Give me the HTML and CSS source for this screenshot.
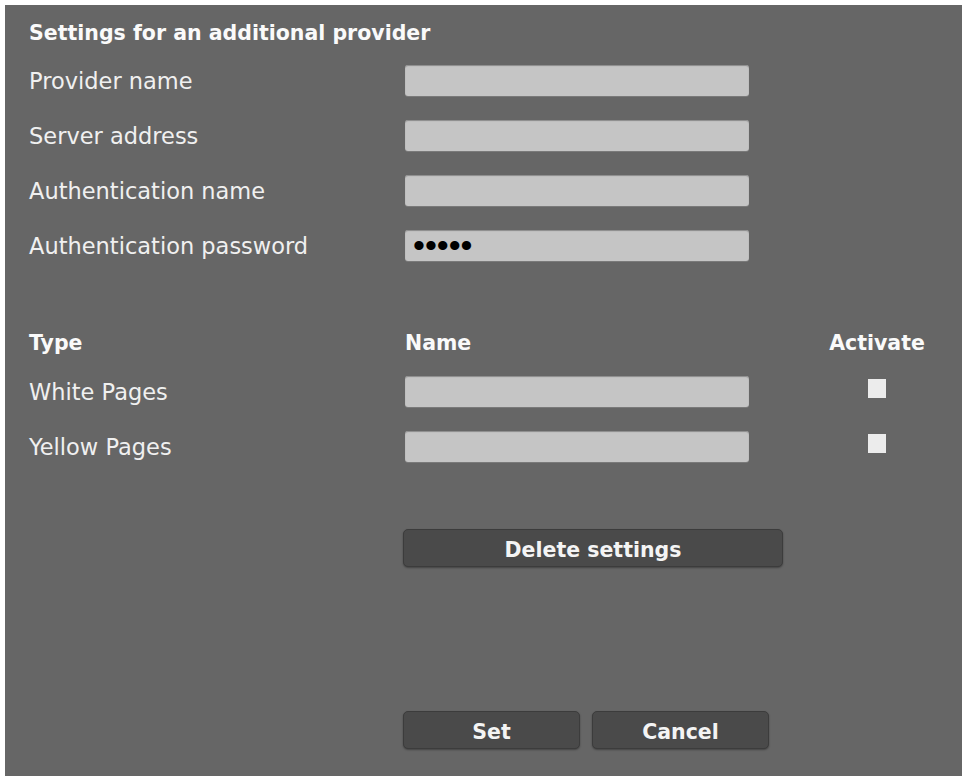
FILE: index.html
```html
<!DOCTYPE html>
<html>
	<head>
		<meta charset="UTF-8">
		<title>Settings for an additional provider</title>
		<link rel="stylesheet" href="styles.css">
	</head>
	<body>
		<div id="panel">
			<h2>Settings for an additional provider</h2>
			<div class="row">
				<label>Provider name</label><input type="text">
			</div>
			<div class="row">
				<label>Server address</label><input type="text">
			</div>
			<div class="row">
				<label>Authentication name</label><input type="text">
			</div>
			<div class="row">
				<label>Authentication password</label><input type="password" value="12345">
			</div>

			<div class="grid head">
				<span>Type</span><span>Name</span><span></span><span class="act">Activate</span>
			</div>
			<div class="grid line">
				<label>White Pages</label><input type="text"><span></span><span class="act"><i class="box"></i></span>
			</div>
			<div class="grid line">
				<label>Yellow Pages</label><input type="text"><span></span><span class="act"><i class="box"></i></span>
			</div>

			<div class="actions del">
				<button class="btn wide">Delete settings</button>
			</div>
			<div class="actions bottom">
				<button class="btn">Set</button>
				<button class="btn">Cancel</button>
			</div>
		</div>
	</body>
</html>
```

FILE: styles.css
```css
*{
	margin: 0;
	padding: 0;
	box-sizing: border-box;
}
body{
	background: #fff;
	font-family: "DejaVu Sans", Verdana, sans-serif;
	color: #f2f2f2;
}
#panel{
	margin: 5px 3px 0 5px;
	height: 771px;
	padding: 16px 0 0 24px;
	background: #666666;
	overflow: hidden;
}
#panel h2{
	font-size: 20.5px;
	line-height: 24px;
	font-weight: bold;
	color: #fafafa;
	margin-bottom: 8px;
}
.row,
.grid{
	display: grid;
	grid-template-columns: 376px 344px 80px 96px;
	align-items: center;
	height: 55px;
	font-size: 22.5px;
}
.row label,
.grid label{
	color: #f0f0f0;
}
input{
	display: block;
	width: 344px;
	height: 31px;
	border: 0;
	border-radius: 3px;
	background: #c5c5c5;
	box-shadow: inset 0 1px 1px #8a8a8a, 0 1px 0 #7a7a7a;
	outline: 0;
	padding-left: 8px;
	font-size: 34px;
	line-height: 31px;
	color: #000;
}
.grid.head{
	height: 24px;
	margin-top: 58px;
	margin-bottom: 9px;
	font-weight: bold;
	font-size: 20.5px;
	color: #fafafa;
}
.act{
	display: flex;
	justify-content: center;
	align-items: center;
}
.box{
	display: block;
	width: 18px;
	height: 19px;
	margin-bottom: 6px;
	background: #ececec;
}
.actions{
	display: flex;
	gap: 12px;
	padding-left: 374px;
}
.del{
	margin-top: 55px;
}
.bottom{
	margin-top: 144px;
}
.btn{
	width: 177px;
	height: 38px;
	padding-top: 3px;
	border: 1px solid #3c3c3c;
	border-radius: 5px;
	background: #4a4a4a;
	box-shadow: 0 1px 2px rgba(0,0,0,0.35);
	color: #f4f4f4;
	font-family: "DejaVu Sans", Verdana, sans-serif;
	font-size: 20.5px;
	font-weight: bold;
	cursor: pointer;
}
.btn.wide{
	width: 380px;
}
```
